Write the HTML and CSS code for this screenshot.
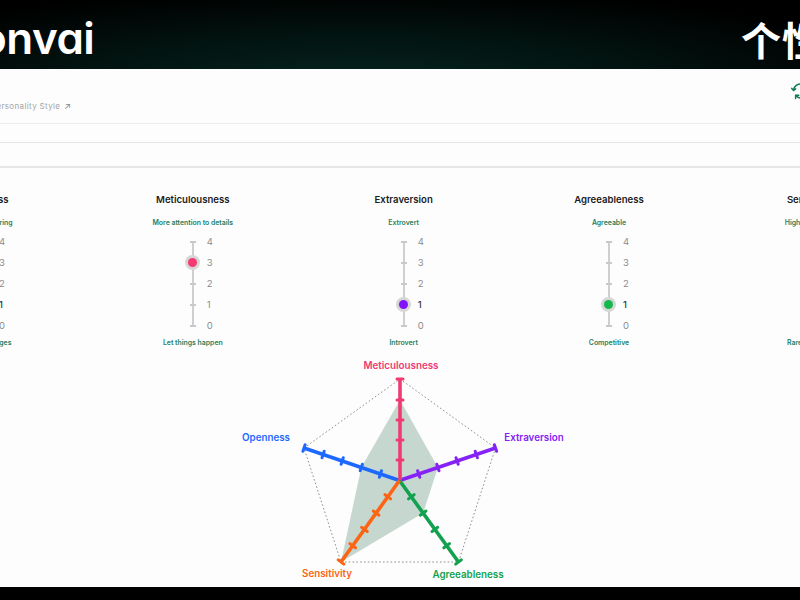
FILE: index.html
```html
<!DOCTYPE html>
<html lang="en">
<head>
<meta charset="utf-8">
<title>Convai personality</title>
<link rel="stylesheet" href="styles.css">
</head>
<body>
<div class="page">
  <header class="banner">
    <span class="brand">Convai</span>
    <span class="cn">个性化</span>
  </header>
  <main class="panel">
    <div class="head">
      <a class="crumb">Personality Style <span class="arrow">↗</span></a>
      <svg class="history" width="20" height="20" viewBox="0 0 20 20" fill="none">
        <path d="M2.6 9.2a7 7 0 0 1 12.4-3.7M17.4 10.8a7 7 0 0 1-12.4 3.7" />
        <path d="M15.4 2.6v3.2h-3.2M4.6 17.4v-3.2h3.2M0.8 7.4l1.8 2 2-1.6" />
        <path d="M10 6v4.4l2.6 1.4" />
      </svg>
    </div>
    <div class="strip"></div>
    <div class="strip strip-b"></div>
    <section class="traits">
      <div class="trait first">
        <h3>Openness</h3>
        <p class="hint">Enjoys exploring</p>
        <div class="scale">
          <div class="stop"><i class="tick"></i><b>4</b></div>
          <div class="stop"><i class="tick"></i><b>3</b></div>
          <div class="stop"><i class="tick"></i><b>2</b></div>
          <div class="stop on"><i class="dot blue"></i><b>1</b></div>
          <div class="stop"><i class="tick"></i><b>0</b></div>
        </div>
        <p class="hint low">Avoids changes</p>
      </div>
      <div class="trait">
        <h3>Meticulousness</h3>
        <p class="hint">More attention to details</p>
        <div class="scale">
          <div class="stop"><i class="tick"></i><b>4</b></div>
          <div class="stop"><i class="dot pink"></i><b>3</b></div>
          <div class="stop"><i class="tick"></i><b>2</b></div>
          <div class="stop"><i class="tick"></i><b>1</b></div>
          <div class="stop"><i class="tick"></i><b>0</b></div>
        </div>
        <p class="hint low">Let things happen</p>
      </div>
      <div class="trait">
        <h3>Extraversion</h3>
        <p class="hint">Extrovert</p>
        <div class="scale">
          <div class="stop"><i class="tick"></i><b>4</b></div>
          <div class="stop"><i class="tick"></i><b>3</b></div>
          <div class="stop"><i class="tick"></i><b>2</b></div>
          <div class="stop on"><i class="dot purple"></i><b>1</b></div>
          <div class="stop"><i class="tick"></i><b>0</b></div>
        </div>
        <p class="hint low">Introvert</p>
      </div>
      <div class="trait">
        <h3>Agreeableness</h3>
        <p class="hint">Agreeable</p>
        <div class="scale">
          <div class="stop"><i class="tick"></i><b>4</b></div>
          <div class="stop"><i class="tick"></i><b>3</b></div>
          <div class="stop"><i class="tick"></i><b>2</b></div>
          <div class="stop on"><i class="dot green"></i><b>1</b></div>
          <div class="stop"><i class="tick"></i><b>0</b></div>
        </div>
        <p class="hint low">Competitive</p>
      </div>
      <div class="trait last">
        <h3>Sensitivity</h3>
        <p class="hint">Highly sensitive</p>
        <div class="scale">
          <div class="stop"><i class="dot orange"></i><b>4</b></div>
          <div class="stop"><i class="tick"></i><b>3</b></div>
          <div class="stop"><i class="tick"></i><b>2</b></div>
          <div class="stop"><i class="tick"></i><b>1</b></div>
          <div class="stop"><i class="tick"></i><b>0</b></div>
        </div>
        <p class="hint low">Rarely worried</p>
      </div>
    </section>
    <svg class="radar" width="800" height="235" viewBox="0 352 800 235">
      <polygon class="frame" points="400,379 495.5,448 458.5,562 341,562 304,448"/>
      <polygon class="area" points="400,400 437.9,467.5 423.1,513.1 341,562 361.3,467.5"/>
      <g class="axis c-blue">
        <path d="M399.5 480.5L304 448"/>
        <path class="t" d="M379.3 477.3l2.2-6.6M360.2 470.8l2.2-6.6M341.1 464.3l2.2-6.6M322 457.8l2.2-6.6M302.9 451.3l2.2-6.6"/>
      </g>
      <g class="axis c-purple">
        <path d="M399.5 480.5L495.5 448"/>
        <path class="t" d="M419.8 477.3l-2.2-6.6M439 470.8l-2.2-6.6M458.2 464.3l-2.2-6.6M477.4 457.8l-2.2-6.6M496.6 451.3l-2.2-6.6"/>
      </g>
      <g class="axis c-pink">
        <path d="M400 481V379"/>
        <path class="t" d="M397 379h6M397 400h6M397 420h6M397 440h6M397 460h6"/>
      </g>
      <g class="axis c-green">
        <path d="M399.5 480.5L458.5 562"/>
        <path class="t" d="M408.5 498.9l5.6-4.2M420.3 515.2l5.6-4.2M432.1 531.5l5.6-4.2M443.9 547.8l5.6-4.2M455.7 564.1l5.6-4.2"/>
      </g>
      <g class="axis c-orange">
        <path d="M399.5 480.5L341 562"/>
        <path class="t" d="M385 494.7l5.6 4.2M373.3 511l5.6 4.2M361.6 527.3l5.6 4.2M349.9 543.6l5.6 4.2M338.2 559.9l5.6 4.2"/>
      </g>
      <text class="lab f-pink" x="401" y="369" text-anchor="middle">Meticulousness</text>
      <text class="lab f-blue" x="266" y="441" text-anchor="middle">Openness</text>
      <text class="lab f-purple" x="534" y="441" text-anchor="middle">Extraversion</text>
      <text class="lab f-orange" x="327" y="577" text-anchor="middle">Sensitivity</text>
      <text class="lab f-green" x="468" y="578" text-anchor="middle">Agreeableness</text>
    </svg>
  </main>
  <div class="foot"></div>
</div>
</body>
</html>
```
FILE: styles.css
```css
* { box-sizing: border-box; }
html, body { margin: 0; height: 100%; overflow: hidden; background: #000; }
body { font-family: Inter, "Noto Sans CJK SC", sans-serif; }
.page { width: 800px; height: 600px; display: flex; flex-direction: column; overflow: hidden; }

.banner {
  flex: 0 0 69px;
  width: 916px;
  margin-left: -52px;
  display: flex;
  justify-content: space-between;
  align-items: center;
  background: radial-gradient(ellipse 62% 130% at 45% 115%, #05231f 0%, #021310 50%, #000 100%);
  color: #fff;
}
.brand {
  font-size: 44px;
  font-weight: 600;
  letter-spacing: -0.5px;
  font-feature-settings: "cv11" 1;
  line-height: 1;
  margin-top: 6px;
}
.cn {
  font-family: "Noto Sans CJK SC", sans-serif;
  font-size: 40px;
  font-weight: 700;
  letter-spacing: 1px;
  line-height: 1;
  margin-top: 8px;
}

.panel { flex: 1 1 auto; min-height: 0; background: #fdfdfd; display: flex; flex-direction: column; overflow: hidden; }
.head {
  flex: 0 0 55px;
  border-bottom: 1px solid #ececec;
  display: flex;
  justify-content: space-between;
  width: 820px;
  margin-left: -9px;
}
.crumb { font-size: 8px; color: #a4a4a4; letter-spacing: 0.35px; margin-top: 32px; line-height: 10px; }
.arrow { font-size: 9px; color: #888; margin-left: 1px; }
.history { margin-top: 12px; stroke: #0b7a55; stroke-width: 1.5; stroke-linecap: round; stroke-linejoin: round; }
.strip { flex: 0 0 19px; border-bottom: 1px solid #e5e5e5; }
.strip-b { flex: 0 0 25px; border-bottom: 2px solid #e6e6e6; }

.traits {
  display: flex;
  gap: 140.5px;
  margin-left: -45px;
  padding-top: 26px;
  width: max-content;
}
.trait { display: flex; flex-direction: column; align-items: center; }
.trait.first { margin-right: -3px; }
.trait.last { margin-left: -3px; }
.trait h3 { margin: 0; font-size: 9.6px; line-height: 12px; font-weight: 600; color: #1b1b1b; white-space: nowrap; }
.hint { margin: 12px 0 3px; font-size: 6.9px; line-height: 10px; font-weight: 600; color: #1f7f60; white-space: nowrap; }
.hint.low { margin: 2px 0 0; }

.scale { position: relative; display: flex; flex-direction: column; width: 60px; }
.scale::before {
  content: "";
  position: absolute;
  left: 29px;
  top: 10px;
  bottom: 10px;
  width: 2px;
  background: #cfcfcf;
}
.stop { position: relative; height: 21px; display: grid; grid-template-columns: 1fr 14px 1fr; align-items: center; justify-items: center; }
.stop b { grid-column: 3; font-size: 9.5px; font-weight: 400; color: #8c8c8c; margin-left: 7px; justify-self: start; }
.stop.on b { color: #3a3a3a; font-weight: 500; }
.tick { grid-column: 2; width: 6px; height: 2px; background: #c9c9c9; }
.dot {
  grid-column: 2;
  width: 9px;
  height: 9px;
  border-radius: 50%;
  box-shadow: 0 0 0 3px #d6d6d6;
}
.pink { background: #f43a70; }
.purple { background: #8312fb; }
.green { background: #15b84c; }
.blue { background: #1f6bff; }
.orange { background: #ff6a13; }

.radar { flex: 0 0 235px; display: block; margin-top: auto; }
.frame { fill: none; stroke: #8f8f8f; stroke-width: 1; stroke-dasharray: 1.6 2.2; }
.area { fill: #c6d7d0; }
.axis { fill: none; stroke-width: 3.6; stroke-linecap: butt; }
.axis .t { stroke-width: 3; stroke-linecap: round; }
.c-blue { stroke: #1d69ff; }
.c-purple { stroke: #8522f5; }
.c-pink { stroke: #ef3a72; }
.c-green { stroke: #12a14e; }
.c-orange { stroke: #fb6514; }
.lab { font-size: 9.8px; font-weight: 600; }
.f-blue { fill: #1d69ff; }
.f-purple { fill: #8522f5; }
.f-pink { fill: #ef3a72; }
.f-green { fill: #12a14e; }
.f-orange { fill: #fb6514; }

.foot { flex: 0 0 13px; background: #000; }
```
